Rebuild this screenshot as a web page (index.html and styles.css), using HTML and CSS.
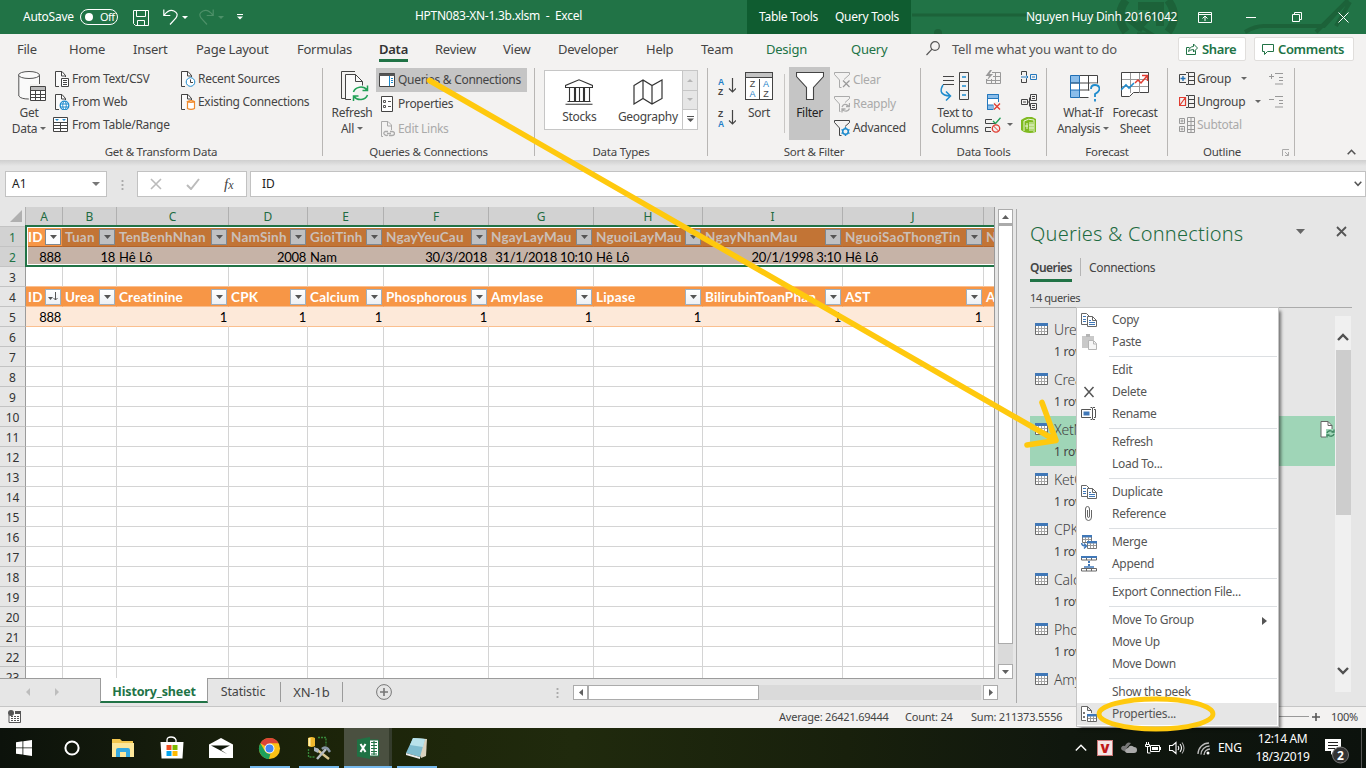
FILE: index.html
```html
<!DOCTYPE html>
<html lang="en">
<head>
<meta charset="utf-8">
<title>HPTN083-XN-1.3b.xlsm - Excel</title>
<link rel="stylesheet" href="styles.css">
</head>
<body>
<svg width="0" height="0" class="defs">
  <symbol id="doc" viewBox="0 0 16 16"><path d="M5 15.500H1.500V.500H8L11.500 4.500V6" fill="#fafafa" stroke="#444"/><path d="M7.500.500V5H12" fill="none" stroke="#444"/></symbol>
  <symbol id="qtable" viewBox="0 0 13 12"><path d="M.5.500h12v11H.5z" fill="#fff" stroke="#6a6a6a"/><path d="M0 0h13v3H0z" fill="#4078b8"/><path d="M1 5.500h11M1 8.500h11M3.500 3v8M6.500 3v8M9.500 3v8" stroke="#a6a6a6"/></symbol>
  <symbol id="copy" viewBox="0 0 16 16"><path d="M.5 1.500h5l3 3v8h-8z" fill="#fff" stroke="#666"/><path d="M6.500 4.500h5l4 4v6h-9z" fill="#fff" stroke="#666"/><path d="M11.500 4.500v4h4" fill="none" stroke="#666"/><path d="M2 4.500h3M2 7.500h3M2 9.500h3M8 8.500h2M8 10.500h6M8 12.500h6" stroke="#4078b8"/></symbol>
</svg>

<header class="titlebar">
  <svg class="circuit" width="453" height="34" viewBox="0 0 453 34" fill="none" stroke="#1c6239" stroke-width="3"><path d="M0 15h118M166 15h65M210 15l30 19h-15"/><path d="M208 15l22 16"/><circle cx="26" cy="33" r="4" fill="#1c6239" stroke="none"/><path d="M214 0q-12 16 0 32M256 0q12 16 0 32" stroke-width="8"/><path d="M224 29l22-22M226 6h22v20" stroke-width="8"/><path d="M333 32q10-6 19-6h60l24-26M404 32l32-32M424 26l14-24" stroke-width="4"/></svg>
  <div class="quick">
    <span class="autosave">AutoSave</span>
    <span class="toggle"><i></i>Off</span>
    <svg class="save" width="16" height="16" viewBox="0 0 16 16" fill="none" stroke="#fff"><path d="M.5.500h15v15h-13l-2-2zM3.500.500v6h9v-6M4.500 15.500v-5h7v5"/></svg>
    <svg class="undo" width="15" height="16" viewBox="0 0 15 16" fill="none" stroke="#fff" stroke-width="1.200"><path d="M.8.500v6h6.500M1 6.300Q6-.3 11 2t2 7L7 15.500"/></svg>
    <i class="caret w"></i>
    <svg class="redo" width="15" height="16" viewBox="0 0 15 16" fill="none" stroke="#4d9068" stroke-width="1.200"><path d="M14.200.500v6H7.700M14 6.300Q9-.3 4 2t-2 7L8 15.500"/></svg>
    <i class="caret g"></i>
    <svg class="more" width="6" height="6" viewBox="0 0 6 6"><path d="M0 .5h6" stroke="#fff"/><path d="M0 2.500h6L3 5.500z" fill="#fff"/></svg>
  </div>
  <div class="filename">HPTN083-XN-1.3b.xlsm&nbsp; -&nbsp; Excel</div>
  <div class="context"><span>Table Tools</span><span>Query Tools</span></div>
  <div class="account">Nguyen Huy Dinh 20161042</div>
  <div class="winbtns">
    <svg width="14" height="11" viewBox="0 0 14 11" fill="none" stroke="#fff"><path d="M.5.500h13v10H.5zM1 2.500h12M7 9V4.500M4.500 6.500L7 4l2.500 2.500"/></svg>
    <svg width="10" height="11" viewBox="0 0 10 11"><path d="M0 5.500h10" stroke="#fff"/></svg>
    <svg width="10" height="10" viewBox="0 0 10 10" fill="none" stroke="#fff"><path d="M.5 2.500h7v7h-7zM2.500 2.500v-2h7v7h-2"/></svg>
    <svg width="11" height="11" viewBox="0 0 11 11" stroke="#fff"><path d="M.5.500l10 10M10.500.500l-10 10"/></svg>
  </div>
</header>

<nav class="tabs">
  <span style="width:52px">File</span><span style="width:64px">Home</span><span style="width:63px">Insert</span><span style="width:101px">Page Layout</span><span style="width:82px">Formulas</span><span class="on" style="width:56px"><b>Data</b></span><span style="width:68px">Review</span><span style="width:55px">View</span><span style="width:88px">Developer</span><span style="width:55px">Help</span><span style="width:65px">Team</span><span class="gr" style="width:85px">Design</span><span class="gr" style="width:75px">Query</span>
  <svg width="14" height="15" viewBox="0 0 14 15" fill="none" stroke="#555" stroke-width="1.200"><circle cx="9" cy="5" r="4.300"/><path d="M6 8.200L.5 14"/></svg>
  <span class="tell">Tell me what you want to do</span>
  <button class="tb share"><svg width="12" height="12" viewBox="0 0 12 12" fill="none" stroke="#217346"><path d="M3.500 4.500h-3v7h9v-4M2.500 8.500q1-5 5-5v-2.500l4 4-4 4V6.500q-3 0-5 2z"/></svg>Share</button>
  <button class="tb"><svg width="12" height="12" viewBox="0 0 12 12" fill="none" stroke="#217346"><path d="M.5 1.500h11v7h-6l-3 3v-3h-2z"/></svg>Comments</button>
</nav>

<section class="ribbon">
  <div class="group" style="width:323px">
    <div class="gbody">
      <div class="big" style="width:44px;margin-left:7px"><svg class="r3" width="28" height="32" viewBox="0 0 28 32"><path d="M.8 5v21q2 3 11 3v-15h10V5" fill="#fafafa"/><path d="M.8 5v21q2 3 10 3M21.500 5v9" fill="none" stroke="#555"/><ellipse cx="11" cy="5" rx="10.500" ry="3.500" fill="#fafafa" stroke="#555"/><path d="M12.500 16.500h15v14h-15z" fill="#fff" stroke="#444"/><path d="M13 17h14v3H13z" fill="#bbb"/><path d="M13 20.500h14M13 24.500h14M13 27.500h14M17.500 20v10M22.500 20v10" stroke="#444"/></svg><span>Get<br>Data<i class="caret"></i></span></div>
      <div class="col" style="margin-left:2px;width:127px">
        <div class="it"><svg width="17" height="16" viewBox="-1 0 17 16"><use href="#doc" width="16" height="16"/><path d="M7.500 7.500h7v8h-7z" fill="#fff" stroke="#444"/><path d="M9 9.500h4M9 11.500h4M9 13.500h4" stroke="#444"/></svg>From Text/CSV</div>
        <div class="it"><svg width="17" height="16" viewBox="-1 0 17 16"><use href="#doc" width="16" height="16"/><circle cx="10.500" cy="11.500" r="4.300" fill="#fff" stroke="#1e8bcd" stroke-width="1.300"/><path d="M6.500 10h8M6.500 13h8" stroke="#1e8bcd"/><ellipse cx="10.500" cy="11.500" rx="1.800" ry="4" fill="none" stroke="#1e8bcd"/></svg>From Web</div>
        <div class="it"><svg width="17" height="16" viewBox="0 0 17 16"><path d="M.5.500h14v14H.5z" fill="#fff" stroke="#444"/><path d="M1 5.500h13M1 8.500h13M1 11.500h13M7.500 5v9" stroke="#444"/><path d="M2 2h4L4 4zM9 2h4l-2 2z" fill="#1e8bcd"/></svg>From Table/Range</div>
      </div>
      <div class="col">
        <div class="it"><svg width="16" height="16" viewBox="0 0 16 16"><use href="#doc" width="16" height="16"/><circle cx="10.500" cy="11" r="4.300" fill="#fff" stroke="#1e8bcd"/><path d="M10.500 8.500v3h2.500" fill="none" stroke="#444"/></svg>Recent Sources</div>
        <div class="it"><svg width="16" height="16" viewBox="0 0 16 16"><use href="#doc" width="16" height="16"/><path d="M7.500 7.500v7q3.500 1.800 7 0v-7q-3.500-1.800-7 0q3.500 1.800 7 0" fill="#fff" stroke="#f08a2c" stroke-width="1.200"/></svg>Existing Connections</div>
      </div>
    </div>
    <div class="glabel">Get &amp; Transform Data</div>
  </div>

  <div class="group" style="width:212px">
    <div class="gbody">
      <div class="big" style="width:50px;margin-left:4px"><svg class="r3" width="28" height="32" viewBox="0 0 28 32"><path d="M4.500 28.500H.5V1.500H14" fill="none" stroke="#444"/><path d="M12 28.500H4.500v-24h11l7 7v5l-8 5z" fill="#fafafa"/><path d="M10 29.500H4.500v-25h10l7 7v4M14.500 4.500v7h7" fill="none" stroke="#444"/><path d="M12.500 22a7.500 6.500 0 0 1 13.500-2M26.500 25a7.500 6.500 0 0 1-13.500 1.500M26.500 15.500v5h-5M12.500 31v-5h5" fill="none" stroke="#22a157" stroke-width="1.500"/></svg><span>Refresh<br>All<i class="caret"></i></span></div>
      <div class="col qc">
        <div class="it sel"><svg width="16" height="14" viewBox="0 0 16 14"><path d="M.5.500h15v13H.5z" fill="#fff" stroke="#444"/><path d="M0 .5h16v2.500H0z" fill="#555"/><path d="M10.500 3v10" stroke="#1e8bcd"/><path d="M12 5.500h2M12 7.500h2M12 9.500h2" stroke="#1e8bcd"/></svg>Queries &amp; Connections</div>
        <div class="it"><svg width="16" height="16" viewBox="0 0 16 16"><path d="M2.500.500h11v15h-11z" fill="#fff" stroke="#444"/><path d="M4.500 4.500h2v2h-2zM4.500 9.500h2v2h-2zM9 5.500h3M9 10.500h3" fill="none" stroke="#555"/></svg>Properties</div>
        <div class="it dis"><svg width="16" height="16" viewBox="0 0 16 16" fill="none" stroke="#aaa"><path d="M4 15.500H2.500V.500H9l3.500 3.500v5M8.500.500V5h4"/><path d="M9 14a2.500 2 0 0 1-3-3.500h3M11 10.500h2a2.500 2 0 0 1 0 4h-3M8 12.500h4" stroke-width="1.300"/></svg>Edit Links</div>
      </div>
    </div>
    <div class="glabel">Queries &amp; Connections</div>
  </div>

  <div class="group" style="width:173px">
    <div class="gbody">
      <div class="gallery">
        <div class="gi"><svg width="28" height="26" viewBox="0 0 28 26" fill="none" stroke="#333" stroke-width="1.100"><path d="M.5 8.500v-2L14 .800l13.500 5.700v2zM2.500 22.500h23M.5 25.200h27M4.500 9v13M9.500 9v13M10.500 9v13M14.500 9v13M18.500 9v13M19.500 9v13M24.500 9v13"/></svg>Stocks</div>
        <div class="gi"><svg width="30" height="26" viewBox="0 0 30 26" fill="none" stroke="#333" stroke-width="1.200"><path d="M1 6.500L10 1l9 5.500L29 1v18.500L19 25l-9-5.500L1 25zM10 1v18.500M19 6.500V25"/></svg>Geography</div>
        <div class="gs"><i><svg width="6" height="4"><path d="M0 4h6L3 1z" fill="#b5b5b5"/></svg></i><i><svg width="6" height="4"><path d="M0 0h6L3 3z" fill="#b5b5b5"/></svg></i><i class="l"><svg width="7" height="7" viewBox="0 0 7 7"><path d="M0 .5h7" stroke="#555"/><path d="M0 2.500h7L3.500 6z" fill="#555"/></svg></i></div>
      </div>
    </div>
    <div class="glabel">Data Types</div>
  </div>

  <div class="group" style="width:213px">
    <div class="gbody">
      <div class="azcol">
        <div class="azi"><div><b>A</b><span>Z</span></div><svg width="8" height="18" viewBox="0 0 8 18"><path d="M4.500 1v14M1 11.500L4.500 15 8 11.500" fill="none" stroke="#444" stroke-width="1.200"/></svg></div>
        <div class="azi"><div><span>Z</span><b>A</b></div><svg width="8" height="18" viewBox="0 0 8 18"><path d="M4.500 1v14M1 11.500L4.500 15 8 11.500" fill="none" stroke="#444" stroke-width="1.200"/></svg></div>
      </div>
      <div class="big sort"><div class="sortbox"><div><span>Z</span><b>A</b></div><div><b>A</b><span>Z</span></div></div><span>Sort</span></div>
      <i class="thin"></i>
      <div class="big pressed"><svg width="28" height="32" viewBox="0 0 28 32"><path d="M.5 2.500h27v4l-10 11v12h-7v-12l-10-11z" fill="#fff" stroke="#444" stroke-width="1.100"/></svg><span>Filter</span></div>
      <div class="col fl">
        <div class="it dis"><svg width="16" height="17" viewBox="0 0 16 17" fill="none" stroke="#aaa"><path d="M7.500 15.500h-2V8L.5 2.500v-2h15v2L10 7.500"/><path d="M9 8.500l6.500 6.500M15.500 8.500L9 15" stroke="#999" stroke-width="1.200"/></svg>Clear</div>
        <div class="it dis"><svg width="16" height="17" viewBox="0 0 16 17" fill="none" stroke="#aaa"><path d="M6.500 15.500h-1V8L.5 2.500v-2h15v2L11 6.500"/><path d="M8 11q2-4.500 6-1.500l1 1M15.500 7v3.500H12M15.500 12.500q-2 4-6 2l-1-1M8 16.500V13h3.500" stroke-width="1.300"/></svg>Reapply</div>
        <div class="it"><svg width="16" height="17" viewBox="0 0 16 17" fill="none" stroke="#444"><path d="M7.500 15.500h-2V8L.5 2.500v-2h15v2L11 6.500"/><circle cx="11.500" cy="11.500" r="2.800" stroke="#1e8bcd" stroke-width="1.500"/><path d="M11.500 7v2M11.500 14v2M7.500 9.500l1.500 1M14 12.500l1.500 1M7.500 13.500l1.500-1M14 10.500l1.500-1" stroke="#1e8bcd" stroke-width="1.500"/></svg>Advanced</div>
      </div>
    </div>
    <div class="glabel">Sort &amp; Filter</div>
  </div>

  <div class="group" style="width:126px">
    <div class="gbody">
      <div class="big" style="width:56px;margin-left:6px"><svg class="l3" width="32" height="32" viewBox="0 0 32 32" fill="none" stroke="#444"><path d="M6 6.500h11M6 10.500h11M6 14.500h11"/><path d="M22.500 2.500h9v27h-9zM22.500 11.500h9M22.500 20.500h9"/><path d="M25 7h4M25 16h4M25 25h4" stroke="#1e8bcd" stroke-width="1.300"/><path d="M6 15Q0 25 13 26M9 21.500l4.500 4.500L9 30.500" stroke="#1e8bcd" stroke-width="1.500"/></svg><span>Text to<br>Columns</span></div>
      <div class="icol" style="margin-left:2px">
        <svg width="16" height="16" viewBox="0 0 16 16" fill="none" stroke="#999"><path d="M7 2.500h8.500v11h-14V9M8 6.500h7.500M2 10.500h13.500M6.500 9v4.500M10.500 2.500v11"/><path d="M5 0L.5 6H4L2 10.500 8 4H4.500L7 0z" fill="#999" stroke="none"/></svg>
        <svg width="16" height="16" viewBox="0 0 16 16" fill="none" stroke="#2478bd"><path d="M2.500.500h11v15h-11z" fill="#fff"/><path d="M2.500.500h11v4h-11zM2.500 11h6v4.500h-6z" fill="#8abdea"/><path d="M8.500 8h8v8.500h-8z" fill="#f3f2f1" stroke="none"/><path d="M9 9.500l6 6M15 9.500l-6 6" stroke="#e03c31" stroke-width="1.300"/></svg>
        <svg width="16" height="16" viewBox="0 0 16 16" fill="none" stroke="#444"><path d="M7 2.500H.5v4H10M6 10.500H.5v4H6"/><path d="M8 4l2.500 2.500L15.500.800" stroke="#22a157" stroke-width="1.300"/><circle cx="11" cy="11.500" r="3.700" stroke="#e03c31" stroke-width="1.300"/><path d="M8.500 9l5 5" stroke="#e03c31"/></svg>
      </div>
      <i class="caret cc"></i>
      <div class="icol i2">
        <svg width="16" height="16" viewBox="0 0 16 16" fill="none" stroke="#444"><path d="M.5 5V1.500h5V5M.5 9v3.500h5V9"/><path d="M0 7h7M5 5l2 2-2 2M9.500 4.500h6v5h-6zM11 7h3" stroke="#2478bd"/></svg>
        <svg width="16" height="16" viewBox="0 0 16 16" fill="none" stroke="#444"><path d="M.5 5.500h6v5h-6zM9.500.500h6v6h-6zM9.500 9.500h6v6h-6zM2 8h3M11 2.500h3M11 4.500h3M11 11.500h3M11 13.500h3M7 8h1.500V3.500M8.500 8v4.500"/></svg>
        <svg width="16" height="16" viewBox="0 0 16 16"><path d="M0 3Q6-1.500 11 0l4 2v13Q9 17 3 15l-3-2z" fill="#7fba20"/><path d="M3 14V4q4-3 10-1v12M4 9h3M6 6v6M9 5v9M11 5v9M8 8h5M8 11h5" stroke="#e9f6d5" fill="none"/></svg>
      </div>
    </div>
    <div class="glabel">Data Tools</div>
  </div>

  <div class="group" style="width:121px">
    <div class="gbody">
      <div class="big" style="width:56px;margin-left:8px"><svg class="r2" width="30" height="32" viewBox="0 0 30 32"><path d="M.5 5.500h27v22H.5z" fill="#fff"/><path d="M.5 5.500h9v22h-9z" fill="#8abdea"/><path d="M.5 13h9v7h-9z" fill="#fff"/><path d="M9.500 5.500h18v9M.5 13h27M9.500 20h10M18.500 5.500v15M9.500 27.500h9" stroke="#444" fill="none"/><path d="M.5 5.500h9v22h-9zM.5 13h9M.5 20h9" stroke="#1f6fb5" fill="none"/><path d="M20 13.500h10v19H20z" fill="#f3f2f1"/><path d="M21 19q0-4 4-4t4.500 3.500q0 3-4.500 5.500v3M25 29v2.500" stroke="#1e8bcd" stroke-width="1.800" fill="none"/></svg><span>What-If<br>Analysis<i class="caret"></i></span></div>
      <div class="big" style="width:48px"><svg width="28" height="32" viewBox="0 0 28 32" fill="none"><path d="M.5 2.500h27v20h-15l-4 4H.5z" fill="#fff" stroke="#444"/><path d="M1 9.500h26M1 16.500h26M9.500 3v20M18.500 3v20" stroke="#999"/><path d="M0 20l5-5 3 3 5-5" stroke="#1e8bcd" stroke-width="1.600"/><path d="M14 13l3-3 3 3 6-7M21 5.500h5.500V11" stroke="#e03c31" stroke-width="1.500"/></svg><span>Forecast<br>Sheet</span></div>
    </div>
    <div class="glabel">Forecast</div>
  </div>

  <div class="group" style="width:127px">
    <div class="gbody">
      <div class="col" style="margin-left:11px;width:90px">
        <div class="it"><svg width="16" height="16" viewBox="0 0 16 16" fill="none" stroke="#444"><path d="M7 3.500H.5v8H7M9.500 1.500h6v12h-6zM9.500 5.500h6M9.500 9.500h6M7 1.500h2M7 13.500h2"/><path d="M4 5v5M1.500 7.500h5" stroke="#1f6fb5" stroke-width="1.300"/></svg>Group<i class="caret" style="margin-left:8px"></i></div>
        <div class="it"><svg width="16" height="16" viewBox="0 0 16 16" fill="none" stroke="#444"><path d="M9.500 1.500h6v12h-6zM9.500 5.500h6M9.500 9.500h6M7 1.500h2M7 13.500h2"/><path d="M.5 3.500h6v8h-6zM1 11l5-7" stroke="#e03c31" stroke-width="1.200"/></svg>Ungroup<i class="caret" style="margin-left:8px"></i></div>
        <div class="it dis"><svg width="16" height="16" viewBox="0 0 16 16" fill="none" stroke="#999"><path d="M.5 1.500h5v5h-5zM.5 9.500h5v5h-5zM8.500.500h7v15h-7zM8.500 4.500h7M8.500 8.500h7M8.500 12.500h7M12 .5v15M3 2.500v3M1.500 4h3M3 10.500v3M1.500 12h3"/></svg>Subtotal</div>
      </div>
      <div class="col">
        <div class="it"><svg width="16" height="16" viewBox="0 0 16 16" stroke="#999"><path d="M0 5.500h5M2.500 3v5M6 2.500h8M10 6.500h4M10 9.500h4M6 13h8"/></svg></div>
        <div class="it"><svg width="16" height="16" viewBox="0 0 16 16" stroke="#999"><path d="M0 5.500h5M6 2.500h8M10 6.500h4M10 9.500h4M6 13h8"/></svg></div>
      </div>
    </div>
    <div class="glabel out">Outline<svg width="7" height="7" viewBox="0 0 7 7" fill="none" stroke="#aaa"><path d="M.5 7V.500H7M3 3l3.500 3.500M6.500 3v3.500H3"/></svg></div>
  </div>
  <svg class="collapse" width="9" height="6" viewBox="0 0 9 6"><path d="M.7 5.300l3.800-4 3.800 4" fill="none" stroke="#555" stroke-width="1.600"/></svg>
</section>

<div class="fbar">
  <div class="namebox">A1<i class="caret d"></i></div>
  <span class="dots"></span>
  <div class="fbtns">
    <svg width="12" height="12" viewBox="0 0 12 12"><path d="M1 1l10 10M11 1L1 11" stroke="#bbb" stroke-width="1.600"/></svg>
    <svg width="14" height="12" viewBox="0 0 14 12"><path d="M1 7l4 4 8-10" fill="none" stroke="#bbb" stroke-width="2"/></svg>
    <span class="fx">f<small>x</small></span>
  </div>
  <div class="finput">ID<svg width="8" height="6" viewBox="0 0 8 6"><path d="M.7.700L4 4.300 7.300.700" fill="none" stroke="#555" stroke-width="1.500"/></svg></div>
</div>

<main class="work">
  <div class="book">
    <div class="gridwrap">
      <div class="sheet"><div id="grid"></div><div class="selection"></div></div>
      <div class="vscroll">
        <i class="sb"><svg width="7" height="4"><path d="M0 4h7L3.500 0z" fill="#606060"/></svg></i>
        <div class="vthumb"></div><div class="vtrack"></div>
        <i class="sb"><svg width="7" height="4"><path d="M0 0h7L3.500 4z" fill="#606060"/></svg></i>
      </div>
    </div>
    <div class="sheettabs">
      <svg class="nav" width="34" height="8" viewBox="0 0 34 8"><path d="M4 0v8L0 4zM29 0v8l4-4z" fill="#bdbdbd"/></svg>
      <span class="st act">History_sheet</span><span class="st s2">Statistic</span><span class="st s3">XN-1b</span>
      <svg class="add" width="16" height="16" viewBox="0 0 16 16" fill="none" stroke="#777"><circle cx="8" cy="8" r="7.400"/><path d="M8 4v8M4 8h8" stroke-width="1.600"/></svg>
      <span class="dots hd"></span>
      <div class="hscroll"><i class="sb"><svg width="4" height="7"><path d="M4 0v7L0 3.500z" fill="#606060"/></svg></i><div class="hthumb"></div><div class="htrack"></div><i class="sb"><svg width="4" height="7"><path d="M0 0v7l4-3.500z" fill="#606060"/></svg></i></div>
    </div>
  </div>
  <aside class="pane">
    <div class="phead"><h1>Queries &amp; Connections</h1><svg class="pc" width="9" height="5"><path d="M0 0h9L4.500 5z" fill="#666"/></svg><svg width="11" height="11" viewBox="0 0 11 11"><path d="M1 1l9 9M10 1l-9 9" stroke="#555" stroke-width="1.800"/></svg></div>
    <div class="ptabs"><b>Queries</b><i></i><span>Connections</span></div>
    <div class="count">14 queries</div>
    <div class="plist">
      <div class="items" id="queries"></div>
      <div class="pscroll"><svg width="12" height="9" viewBox="0 0 12 9"><path d="M1 7l5-5 5 5" fill="none" stroke="#505050" stroke-width="2.400"/></svg><i></i><svg width="12" height="9" viewBox="0 0 12 9"><path d="M1 2l5 5 5-5" fill="none" stroke="#505050" stroke-width="2.400"/></svg></div>
    </div>
  </aside>
</main>

<div class="status">
  <svg width="13" height="13" viewBox="0 0 13 13"><path d="M1 5v7.500h11.500V1.500H7" fill="#fff" stroke="#555"/><circle cx="3" cy="3" r="3" fill="#555"/><path d="M7 1h6v3H7z" fill="#555"/><path d="M3 6.500h8M3 8.500h8M3 10.500h8" stroke="#555" stroke-dasharray="2 1"/></svg>
  <span class="s-avg">Average: 26421.69444</span><span class="s-cnt">Count: 24</span><span class="s-sum">Sum: 211373.5556</span>
  <span class="zl"></span><svg class="plus" width="8" height="8"><path d="M4 0v8M0 4h8" stroke="#555" stroke-width="1.600"/></svg><span class="zoom">100%</span>
</div>

<footer class="taskbar">
  <div class="slot s48"><svg width="16" height="16" viewBox="0 0 16 16" fill="#fff"><path d="M0 2.200L6.500 1.300v6.200H0zM7.300 1.200L16 0v7.500H7.300zM0 8.300h6.500v6.300L0 13.700zM7.300 8.300H16V16l-8.700-1.200z"/></svg></div>
  <div class="slot s48 cort"><svg width="16" height="16"><circle cx="8" cy="8" r="6.600" fill="none" stroke="#fff" stroke-width="2"/></svg></div>
  <div class="slot"><svg width="22" height="20" viewBox="0 0 22 20"><path d="M0 1h8l2 2h11v14H0z" fill="#f3c74f"/><path d="M0 5h22v14H0z" fill="#fde79a"/><path d="M4 19v-7q0-2 2-2h10q2 0 2 2v7h-4v-5H8v5z" fill="#35a9e1"/></svg></div>
  <div class="slot"><svg class="up" width="24" height="23" viewBox="0 0 24 23"><path d="M7 6V4q0-3 4-3t5 3v2" fill="none" stroke="#fff" stroke-width="1.300"/><path d="M.5 6h23l-1 16.500h-21z" fill="#fff"/><path d="M6.500 9h5v5h-5z" fill="#f25022"/><path d="M12.500 9h5v5h-5z" fill="#7fba00"/><path d="M6.500 15h5v5h-5z" fill="#00a4ef"/><path d="M12.500 15h5v5h-5z" fill="#ffb900"/></svg></div>
  <div class="slot"><svg width="24" height="20" viewBox="0 0 24 20"><path d="M0 6.500L12 0l12 6.500V20H0z" fill="#fff"/><path d="M2 7.500h19L12 12l6 4z" fill="#11180b"/></svg></div>
  <div class="slot run"><svg width="23" height="23" viewBox="0 0 24 24"><circle cx="12" cy="12" r="11" fill="#fbc116"/><path d="M12 12L2.500 6.500A11 11 0 0 1 21.600 6.500H12z" fill="#db4437"/><path d="M2.500 6.400L7.300 14.800A5.500 5.500 0 0 0 13 17.300L11.500 23A11 11 0 0 1 2.500 6.400z" fill="#1da05b"/><circle cx="12" cy="12" r="5.200" fill="#fff"/><circle cx="12" cy="12" r="4.200" fill="#4285f4"/></svg></div>
  <div class="slot run"><svg width="24" height="25" viewBox="0 0 24 25"><path d="M1 2q3.500-2 7 0v8q-3.500 2-7 0z" fill="#f0b92e"/><path d="M2.500 2v8" stroke="#fff2b0" stroke-width="2"/><path d="M11 1.500h8v8M1.500 13v8h6" fill="none" stroke="#37883a" stroke-dasharray="2 1" stroke-width="1.300"/><path d="M9 13l13 10" stroke="#d9c68e" stroke-width="2.500"/><path d="M10 23l9-10" stroke="#b7bcc2" stroke-width="2.500"/><path d="M15 13q3-3 6 0l2 3" stroke="#8a98a8" stroke-width="2.500" fill="none"/><path d="M7 11l5 2-1 4-4-2" fill="#aab4be"/></svg></div>
  <div class="slot run xl"><svg width="22" height="22" viewBox="0 0 22 22"><path d="M12 3h9.500v16H12z" fill="#fff" stroke="#217346"/><path d="M14 5.500h6M14 8.500h6M14 11.500h6M14 14.500h6M14 17h6M17 4v14" stroke="#217346" stroke-width="1.200"/><path d="M0 2.500L13 0v22L0 19.500z" fill="#1f7244"/><path d="M3.500 7l5 8M8.500 7l-5 8" stroke="#fff" stroke-width="2"/></svg></div>
  <div class="slot run np"><svg width="24" height="24" viewBox="0 0 24 24"><path d="M8 2l14 1-1 17-5 2z" fill="#d9d2bf"/><path d="M8 2l12 1-5 18-14-4z" fill="#7fbccf"/><path d="M8 2l12 1-2 8-13-2z" fill="#b9e2eb"/><path d="M1 17l14 4v2L1 19z" fill="#eee"/></svg></div>
  <div class="tray">
    <svg width="12" height="8" viewBox="0 0 12 8"><path d="M.8 6.500L6 1.300l5.200 5.200" fill="none" stroke="#fff" stroke-width="1.400"/></svg>
    <span class="vk">V</span>
    <svg width="16" height="12" viewBox="0 0 16 12"><path d="M3 9Q-1 8 .5 5 2 3 4 4 6-1 10 1L5 7v3z" fill="#777"/><path d="M6 11Q3 10 5 7q1-1 2-1 2-4 6-1 3 0 3 3t-3 3z" fill="#aaa"/></svg>
    <svg width="16" height="12" viewBox="0 0 16 12" fill="none" stroke="#fff"><path d="M5.500 3.500h9v6h-9zM15.500 5v3M1.500 0v2M3.500 0v2M.5 2.500h4v2h-4zM2.500 5v6h3"/><path d="M7 5h6v3H7z" fill="#fff" stroke="none"/></svg>
    <svg width="16" height="14" viewBox="0 0 16 14" fill="none" stroke="#fff" stroke-width="1.100"><path d="M.5 4.500h3L7 1.500v11L3.500 9.500h-3zM9 5q1.500 2 0 4M11 3q3 4 0 8"/><path d="M13 1.500q4 5.500 0 11" stroke="#aaa"/></svg>
    <svg width="13" height="13" viewBox="0 0 13 13" fill="none" stroke="#bbb" stroke-width="1.300"><path d="M1 12A11 11 0 0 1 12 1M4 12.500A8.500 8.500 0 0 1 12.500 4M7 13A6 6 0 0 1 13 7"/><circle cx="11" cy="11" r="1.500" fill="#fff" stroke="none"/></svg>
    <span class="eng">ENG</span>
    <span class="clock">12:14 AM<br>18/3/2019</span>
    <svg class="note" width="25" height="26" viewBox="0 0 25 26"><path d="M0 1h16v12H9l-3 4v-4H0z" fill="#fff"/><path d="M3 4.500h10M3 7.500h10M3 10.500h7" stroke="#222"/><circle cx="15.500" cy="17" r="8" fill="#333" stroke="#777"/><text x="12" y="21.500" class="nn">2</text></svg>
    <i class="peek"></i>
  </div>
</footer>

<div class="menu">
  <div class="mi"><svg width="16" height="16"><use href="#copy"/></svg>Copy</div>
  <div class="mi"><svg width="16" height="16" viewBox="0 0 16 16"><path d="M1 2h12v5H7v7H1z" fill="#c9c9c9"/><path d="M5 0h4v3H5z" fill="#b5b5b5"/><path d="M7.500 6.500h5l3 3v6h-8z" fill="#f6f6f6" stroke="#b5b5b5"/><path d="M12.500 7v3h3" fill="none" stroke="#b5b5b5"/></svg>Paste</div><hr>
  <div class="mi"><svg width="16" height="16"></svg>Edit</div>
  <div class="mi"><svg width="16" height="16"><path d="M3.500 3l9 10M12.500 3l-9 10" stroke="#555" stroke-width="1.500"/></svg>Delete</div>
  <div class="mi"><svg width="16" height="16" viewBox="0 0 16 16" fill="none" stroke="#555"><path d="M10 3.500H.5v8H10M13 3.500h1.500v8H13M9.500 1.500h1.500l.5.500.5-.5H14M9.500 13.500h1.500l.5-.5.5.500H14M11.500 2v11"/><path d="M2.500 5.500h6v4h-6z" fill="#4078b8" stroke="none"/></svg>Rename</div><hr>
  <div class="mi"><svg width="16" height="16"></svg>Refresh</div>
  <div class="mi"><svg width="16" height="16"></svg>Load To...</div><hr>
  <div class="mi"><svg width="16" height="16"><use href="#copy"/></svg>Duplicate</div>
  <div class="mi"><svg width="16" height="16" viewBox="0 0 16 16" fill="none" stroke="#666"><path d="M6.500 4v6q0 1.500 1 1.500t1-1.500V3q0-2.500-2-2.500T4.500 3v8q0 3.500 3 3.500t3-3.500V4"/></svg>Reference</div><hr>
  <div class="mi"><svg width="16" height="16" viewBox="0 0 16 16"><path d="M1.500 1.500h9v7h-9zM6.500 7.500h9v7h-9z" fill="#fff" stroke="#777"/><path d="M1 1h10v2.500H1zM6 7h10v2.500H6z" fill="#4078b8"/><path d="M2 5.500h8M4.500 3v5M7.500 3v4M7 11.500h8M9.500 9v5M12.500 9v5" stroke="#999"/><path d="M.7 9q0 3 4 3M3 9.500l2.500 2.500L3 14.500" fill="none" stroke="#4078b8" stroke-width="1.500"/></svg>Merge</div>
  <div class="mi"><svg width="16" height="16" viewBox="0 0 16 16"><path d="M.5 1.500h15v2.500H.5zM.5 12.500h15v2.500H.5zM5.500 1v3M10.500 1v3M5.500 12v3M10.500 12v3" fill="#fff" stroke="#666"/><path d="M0 0h16v2H0zM7 5h2v2H7zM7 8h2v2H7z" fill="#4078b8"/><path d="M3 11h10" stroke="#4078b8" stroke-width="1.500"/></svg>Append</div><hr>
  <div class="mi"><svg width="16" height="16"></svg>Export Connection File...</div><hr>
  <div class="mi"><svg width="16" height="16"></svg>Move To Group<svg class="sub" width="5" height="8"><path d="M0 0v8l5-4z" fill="#555"/></svg></div>
  <div class="mi"><svg width="16" height="16"></svg>Move Up</div>
  <div class="mi"><svg width="16" height="16"></svg>Move Down</div><hr>
  <div class="mi"><svg width="16" height="16"></svg>Show the peek</div>
  <div class="mi hov"><svg width="16" height="16" viewBox="0 0 16 16"><path d="M5 14.500H.5v-14h6l4 4V7M6.500.500v4h4" fill="#fff" stroke="#666"/><path d="M2 6h2v2H2zM2 10h2v2H2z" fill="#777"/><path d="M6.500 8.500h9v7h-9z" fill="#fff" stroke="#666"/><path d="M6 8h10v2.500H6z" fill="#4078b8"/><path d="M7 12.500h8M9.500 10v5M12.500 10v5" stroke="#999"/></svg>Properties...</div>
</div>

<svg class="marks" width="1366" height="768" fill="none" stroke="#ffc90e" stroke-linecap="round" stroke-linejoin="round">
  <path d="M429.500 80.500L1055 440M1042 402.500L1056 440.500L1027 445" stroke-width="5.600"/>
  <ellipse cx="1156" cy="714" rx="57" ry="15" stroke-width="4.800"/>
</svg>
<script src="grid.js"></script>
</body>
</html>
```

FILE: styles.css
```css
* { box-sizing: border-box; }
body { margin: 0; width: 1366px; height: 768px; overflow: hidden; position: relative; font: 12px/16px "Noto Sans", "Open Sans", sans-serif; color: #444; background: #e6e6e6; display: flex; flex-direction: column; }
svg { flex: none; display: block; }
i { font-style: normal; }
.defs { position: absolute; }
.caret { display: inline-block; flex: none; border: 3px solid transparent; border-top: 3px solid #666; border-bottom: 0; vertical-align: 3px; margin-left: 3px; }
.caret.w { border-top-color: #fff; }
.caret.g { border-top-color: #4d9068; }
.caret.d { border-width: 4px 4px 0; border-top-color: #777; }

.titlebar { height: 34px; flex: none; background: #217346; color: #fff; display: flex; align-items: center; position: relative; }
.circuit { position: absolute; left: 911px; top: 0; width: 455px; }
.circuit ~ * { position: relative; }
.titlebar > div { letter-spacing: -.27px; }
.quick { display: flex; align-items: center; width: 415px; padding-left: 23px; }
.autosave { width: 57px; }
.toggle { width: 38px; height: 16px; border: 1px solid #fff; border-radius: 8px; display: flex; align-items: center; gap: 7px; padding-left: 4px; font-size: 11px; letter-spacing: -.5px; }
.toggle i { width: 8px; height: 8px; border-radius: 4px; background: #fff; }
.save { margin-left: 15px; margin-top: 2px; }
.undo { margin-left: 14px; }
.redo { margin-left: 11px; }
.quick .caret { margin-left: 4px; }
.quick .more { margin-left: 13px; }
.filename { width: 332px; height: 18px; }
.context { width: 164px; height: 34px; background: #0f5c30; display: flex; align-items: center; padding-left: 12px; padding-bottom: 1px; }
.context span { width: 80px; }
.account { margin-left: 115px; width: 172px; }
.winbtns { display: flex; align-items: center; }
.winbtns svg:nth-child(1) { margin-right: 34px; }
.winbtns svg:nth-child(2) { margin-right: 36px; }
.winbtns svg:nth-child(3) { margin-right: 36px; }

.tabs { height: 33px; flex: none; background: #f3f2f1; display: flex; align-items: center; padding-left: 17px; font-size: 13px; letter-spacing: -.25px; padding-bottom: 4px; }
.tabs > * { flex: none; }
.tabs .on b { display: inline-block; height: 25px; padding-top: 4px; border-bottom: 3px solid #217346; color: #333; font-weight: 600; line-height: 16px; }
.tabs .on { height: 24px; }
.gr { color: #217346; }
.tell { margin-left: 12px; width: 226px; color: #555; }
.tb { height: 24px; width: 68px; margin: 1px 8px 0 0; padding: 0 0 1px 7px; border: 1px solid #e0dedc; border-radius: 2px; background: #fff; color: #217346; font: 600 13px "Noto Sans", sans-serif; letter-spacing: -.35px; display: flex; align-items: center; gap: 4px; }
.tb + .tb { width: 100px; margin-right: 0; }

.ribbon { height: 93px; flex: none; background: #f3f2f1; display: flex; position: relative; letter-spacing: -.3px; }
.group { flex: none; display: flex; flex-direction: column; position: relative; border-right: 1px solid #b8b6b4; margin: 1px 0 3px; height: 88px; }
.gbody { display: flex; height: 73px; }
.glabel { height: 15px; line-height: 22px; text-align: center; font-size: 11.500px; letter-spacing: -.25px; }
.out { display: flex; justify-content: center; padding-left: 30px; }
.out svg { margin: 8px 0 0 41px; }
.big { display: flex; flex-direction: column; align-items: center; text-align: center; padding-top: 2px; flex: none; white-space: nowrap; }
.big > span { margin-top: 3px; }
.big svg { height: 32px; }
.r3 { margin-left: 6px; }
.r2 { margin-left: 4px; }
.l3 { margin-right: 5px; }
.pressed { width: 41px; height: 73px; margin-top: -1px; padding-top: 3px; background: #c5c5c5; color: #222; }
.col { display: flex; flex-direction: column; flex: none; margin-top: -1px; }
.it { height: 23px; display: flex; align-items: center; gap: 2px; white-space: nowrap; }
.dis { color: #aaa; }
.qc .it { height: 24px; padding-left: 3px; gap: 3px; width: 151px; margin-bottom: .5px; }
.qc { margin-left: -1px; margin-top: 0; }
.qc .it + .it { margin-left: 0; }
.sel { background: #c5c5c5; }
.fl { margin-left: 4px; margin-top: 0; }
.fl .it { height: 24px; gap: 3px; }
.gallery { margin: 2px 0 0 9px; width: 154px; height: 60px; background: #fff; border: 1px solid #c6c6c6; display: flex; }
.gi { width: 69px; display: flex; flex-direction: column; align-items: center; padding-top: 8px; gap: 4px; }
.gs { width: 15px; display: flex; flex-direction: column; border-left: 1px solid #c6c6c6; }
.gs i { flex: 1; background: #e6e6e6; border-bottom: 1px solid #c6c6c6; display: flex; align-items: center; justify-content: center; }
.gs .l { background: #fff; border: 0; }
.azcol { display: flex; flex-direction: column; gap: 12px; padding: 9px 0 0 10px; width: 29px; }
.azi { display: flex; gap: 2px; height: 20px; }
.azi b, .azi span { display: block; width: 8px; font: 700 8.500px/10px "Liberation Sans", sans-serif; letter-spacing: 0; }
.azcol b, .sortbox b { color: #1e7fc8; }
.sort { width: 44px; }
.sortbox { width: 28px; height: 28px; margin: 2px 0 2px; border: 1px solid #444; border-top-width: 1px; background: #fff; display: flex; box-shadow: inset 0 4px #c3c3c3, inset 0 5px #444; padding-top: 6px; }
.sortbox div { width: 13px; }
.sortbox div + div { border-left: 1px solid #444; }
.sortbox b, .sortbox span { display: block; font: 9px/10px "Liberation Sans", sans-serif; letter-spacing: 0; text-align: center; }
.thin { width: 1px; height: 59px; background: #c8c6c4; margin: 6px 4px 0 3px; }
.icol { display: flex; flex-direction: column; gap: 7.500px; padding-top: 2px; }
.i2 { margin-left: -1px; }
.cc { margin: 55px 9px 0 6px; height: 3px; }
.collapse { margin: 82px 0 0 52px; }

.fbar { height: 47px; flex: none; display: flex; align-items: flex-start; padding: 11px 0 0 5px; background: linear-gradient(#cfcfcf, #e6e6e6 6px); font-size: 12px; color: #222; }
.namebox, .fbtns, .finput { height: 26px; background: #fff; border: 1px solid #c2c2c2; display: flex; align-items: center; }
.namebox { width: 102px; padding: 0 6px; justify-content: space-between; }
.dots { width: 3px; height: 11px; margin: 8px 13px 0 14px; background: radial-gradient(circle, #aaa 1px, transparent 1.200px) 0 0 / 3px 4px; }
.fbtns { width: 110px; padding-left: 12px; gap: 24px; }
.fx { font: italic 15px "Liberation Serif", serif; color: #444; }
.fx small { font-size: 12px; }
.finput { margin-left: 3px; flex: 1; padding: 0 4px 0 11px; justify-content: space-between; }
.finput svg { margin-right: -1px; }

.work { flex: none; height: 499px; display: flex; }
.book { width: 1013px; display: flex; flex-direction: column; flex: none; }
.gridwrap { display: flex; height: 472px; }
.sheet { width: 995px; height: 472px; overflow: hidden; position: relative; border-right: 1px solid #9b9b9b; border-bottom: 1px solid #9b9b9b; flex: none; }
.row { display: flex; height: 20px; width: 1010px; font: 13px/19px Lato, sans-serif; color: #000; }
.rh { width: 26px; flex: none; background: #e6e6e6; border-right: 1px solid #9b9b9b; border-bottom: 1px solid #c3c3c3; text-align: center; font: 12px/21px "Noto Sans"; color: #333; }
.row.hl .rh { background: #d2d2d2; color: #217346; border-right-color: #217346; }
.c { flex: none; background: #fff; border-right: 1px solid #d4d4d4; border-bottom: 1px solid #d4d4d4; padding: 1px 2px 0; white-space: nowrap; overflow: hidden; display: flex; justify-content: space-between; }
.c.n { justify-content: flex-end; letter-spacing: -.3px; padding-right: 1px; }
.ch { background: #d2d2d2; color: #1e6b41; justify-content: center; border-right-color: #b0b0b0; border-bottom-color: #b0b0b0; font: 12px/19px "Noto Sans"; padding: 0; }
.corner { display: flex; justify-content: flex-end; align-items: flex-end; padding: 0 3px 4px 0; border-right-color: #b0b0b0; }
.th { background: #f79646; color: #fff; font-weight: 700; font-size: 13.500px; letter-spacing: .2px; padding-right: 1px; border-color: #f79646; border-bottom-color: #f9bd8c; }
.th.s { background: #c27435; color: #cbbfb7; border-color: #c27435; border-bottom-color: #b3642a; }
.sd { background: #c6b3a7; border-color: #c6b3a7; }
.td { background: #fde9d9; border-color: #fde9d9; border-bottom-color: #fabf8f; }
.pre { border-bottom-color: #fabf8f; }
.fb { width: 16px; height: 16px; flex: none; margin-top: 1px; border: 1px solid #9fb0c0; background: linear-gradient(#fff, #eef1f5); display: flex; align-items: center; justify-content: center; }
.s .fb { background: #bfc0c2; border-color: #7e8891; }
.th.s.first { background: #f79646; color: #fff; }
.s.first .fb { background: #fbfcfd; }
.selection { position: absolute; left: 25px; top: 18px; width: 980px; height: 42px; border: 2px solid #217346; box-shadow: inset 0 0 0 1px #fff; }
.vscroll { width: 18px; display: flex; flex-direction: column; padding: 2px 0 0 3px; }
.sb { width: 15px; height: 15px; background: #fff; border: 1px solid #ababab; display: flex; align-items: center; justify-content: center; flex: none; }
.vthumb { height: 420px; background: #fff; border: 1px solid #ababab; border-top-width: 2px; flex: none; }
.vtrack { flex: 1; background: #dadada; }
.sheettabs { height: 27px; display: flex; align-items: flex-start; }
.nav { margin: 9px 0 0 26px; width: 34px; }
.st { height: 24px; line-height: 25px; font-size: 12.500px; letter-spacing: -.15px; text-align: center; }
.act { margin: -1px 0 0 40px; width: 108px; background: #fff; border-left: 1px solid #9b9b9b; border-right: 1px solid #9b9b9b; border-bottom: 2px solid #217346; color: #217346; font-weight: 700; letter-spacing: -.15px; position: relative; height: 25px; line-height: 27px; }
.s2, .s3 { height: 20px; margin-top: 3px; line-height: 20px; border-right: 1px solid #9b9b9b; }
.s2 { width: 73px; padding-right: 2px; }
.s3 { width: 62px; font-size: 13px; }
.add { margin: 5px 0 0 33px; }
.hd { margin: 8px 0 0 164px; }
.hscroll { display: flex; margin: 6px 0 0 14px; height: 15px; width: 425px; flex: none; }
.hthumb { width: 171px; background: #fff; border: 1px solid #ababab; }
.htrack { flex: 1; background: #dadada; margin-right: 2px; }

.pane { margin-left: 3px; flex: 1; border-left: 1px solid #ababab; margin-top: 2px; margin-bottom: 3px; padding-left: 13px; }
.phead { display: flex; height: 44px; align-items: center; padding-top: 5px; }
h1 { margin: 0; width: 266px; font: 300 20px/28px "Noto Sans"; color: #1e6b41; letter-spacing: .2px; white-space: nowrap; }
.phead svg:last-child { margin: -5px 0 0 31px; }
.pc { margin-top: -5px; }
.ptabs { display: flex; height: 31px; align-items: flex-start; padding-top: 5px; letter-spacing: -.35px; }
.ptabs b { width: 42px; height: 24px; padding-top: 2px; border-bottom: 3px solid #217346; font-weight: 600; letter-spacing: -.55px; }
.ptabs i { width: 1px; height: 18px; background: #b5b5b5; margin: 0 8px; }
.ptabs span { padding-top: 2px; }
.count { height: 24px; width: 322px; border-bottom: 1px solid #ababab; font-size: 11px; padding-top: 6px; letter-spacing: -.4px; }
.plist { display: flex; margin-top: 8px; height: 376px; width: 322px; }
.items { width: 305px; overflow: hidden; }
.q { height: 50px; padding-left: 5px; display: flex; gap: 6px; }
.q svg { margin-top: 7px; }
.q div { font: 300 14px/28px "Noto Sans"; letter-spacing: -.2px; width: 264px; }
.q div + svg { margin: 5px 0 0 -3px; }
.q p { margin: -1px 0 0; font: 12px/18px "Noto Sans"; }
.q.g { background: #9fd5b7; }
.pscroll { width: 16px; height: 376px; background: #f0f0f0; display: flex; flex-direction: column; align-items: center; padding-top: 17px; }
.pscroll i { width: 15px; height: 165px; background: #cdcdcd; margin: 8px 0 151px; flex: none; }

.status { height: 22px; flex: none; background: #f3f2f1; border-top: 1px solid #c6c6c6; display: flex; align-items: center; font-size: 11px; letter-spacing: -.22px; padding: 0 0 2px 8px; }
.s-avg { margin-left: 758px; width: 126px; flex: none; }
.s-cnt { width: 66px; flex: none; }
.s-sum { width: 245px; flex: none; }
.zl { height: 1px; width: 93px; background: #999; }
.plus { margin: 0 11px 0 3px; }
.zoom { letter-spacing: -.3px; }

.taskbar { height: 40px; flex: none; background: linear-gradient(90deg, #0c120b, #151c0c 12%, #1c2409 25%, #202a0d 42%, #18200c 62%, #10170e 78%, #0c120d); display: flex; color: #fff; }
.slot { width: 49px; display: flex; align-items: center; justify-content: center; position: relative; flex: none; }
.s48 { width: 48px; }
.cort { margin-right: 2px; }
.up { margin-top: -2px; }
.run { background: linear-gradient(#76b9ed, #76b9ed) center bottom / 40px 2px no-repeat; }
.xl { background: linear-gradient(#76b9ed, #76b9ed) center bottom / 48px 2px no-repeat, linear-gradient(90deg, #4a5040 45px, #343b2b 45px); width: 48px; margin-left: 1px; }
.np { width: 49px; }
.tray { margin-left: auto; display: flex; align-items: center; width: 291px; }
.vk { width: 16px; height: 16px; margin: 0 8px 0 10px; background: #f5e5e5; border: 1px solid #c77; color: #c01818; font: 900 13px/14px "Noto Sans"; text-align: center; }
.tray svg { margin-right: 8px; }
.tray svg:first-child { margin-right: 0; }
.tray svg:nth-of-type(4) { margin-right: 12px; }
.eng { width: 25px; letter-spacing: -.3px; }
.clock { width: 70px; margin-left: 3px; text-align: center; line-height: 18px; letter-spacing: -.35px; padding-left: 3px; flex: none; }
.tray .note { margin: 6px 0 0 9px; }
.nn { font: 700 12px "Noto Sans"; fill: #fff; }
.peek { width: 1px; height: 40px; background: #555; margin-left: 11px; }

.menu { position: absolute; left: 1076px; top: 307px; width: 203px; height: 420px; background: #fff; border: 1px solid #c6c6c6; padding: 1px 0 0; box-shadow: 3px 3px 3px -1px rgba(0,0,0,.5); letter-spacing: -.3px; color: #555; }
.mi { height: 22px; display: flex; align-items: center; padding-left: 4px; gap: 15px; margin-right: 1px; }
.mi svg { margin-top: -1px; }
.menu hr { height: 1px; border: 0; background: #dcdfe2; margin: 3px 1px 2px 32px; }
.hov { background: #e6e6e6; }
.mi .sub { margin: 1px 0 0 53px; }
.marks { position: absolute; left: 0; top: 0; pointer-events: none; }
```

FILE: grid.js
```js
const widths = [37, 54, 112, 79, 76, 105, 105, 109, 140, 141, 26];
const letters = 'ABCDEFGHIJ'.split('');
const head1 = ['ID', 'Tuan', 'TenBenhNhan', 'NamSinh', 'GioiTinh', 'NgayYeuCau', 'NgayLayMau', 'NguoiLayMau', 'NgayNhanMau', 'NguoiSaoThongTin', 'N'];
const row2 = [888, 18, 'Hê Lô', 2008, 'Nam', '30/3/2018', '31/1/2018 10:10', 'Hê Lô', '20/1/1998 3:10', 'Hê Lô', ''];
const head4 = ['ID', 'Urea', 'Creatinine', 'CPK', 'Calcium', 'Phosphorous', 'Amylase', 'Lipase', 'BilirubinToanPhan', 'AST', 'A'];
const row5 = [888, '', 1, 1, 1, 1, 1, 1, 1, 1, ''];
const arrow = '<span class="fb"><svg width="7" height="4"><path d="M0 0h7L3.500 4z" fill="#555"/></svg></span>';
const sorted = '<span class="fb"><svg width="12" height="10"><path d="M1 5h5L3.500 8z" fill="#555"/><path d="M8.500 0v8M6.500 6l2 2 2-2" fill="none" stroke="#555"/></svg></span>';

function row(label, cls, cell) {
  return `<div class="row ${cls}">${label}${widths.map((w, i) => cell(w, i)).join('')}</div>`;
}
function box(w, cls, html) {
  return `<div class="c ${cls}" style="width:${w}px">${html}</div>`;
}
let html = row('<div class="rh corner"><svg width="12" height="12"><path d="M12 0v12H0z" fill="#b0b0b0"/></svg></div>', '', (w, i) => box(w, 'ch', letters[i] || ''));
for (let r = 1; r <= 23; r++) {
  html += row(`<div class="rh">${r}</div>`, r < 3 ? 'hl' : '', (w, i) => {
    if (r === 1) return box(w, 'th s' + (i ? '' : ' first'), `<span>${head1[i]}</span>${i < 10 ? arrow : ''}`);
    if (r === 2) return box(w, 'sd' + (/^\d/.test(row2[i]) ? ' n' : ''), row2[i]);
    if (r === 3) return box(w, 'pre', '');
    if (r === 4) return box(w, 'th', `<span>${head4[i]}</span>${i === 0 ? sorted : i < 10 ? arrow : ''}`);
    if (r === 5) return box(w, 'td n', row5[i]);
    return box(w, '', '');
  });
}
document.getElementById('grid').innerHTML = html;

const names = ['Urea', 'Creatinine', 'XetNghiem', 'KetQua', 'CPK', 'Calcium', 'Phosphorous', 'Amylase'];
const icon = '<svg width="13" height="12"><use href="#qtable"/></svg>';
const loaded = '<svg width="15" height="17" viewBox="0 0 15 17"><path d="M1 .5h7l4 4v11.500H1z" fill="#fff" stroke="#666"/><path d="M8 .5v4h4" fill="none" stroke="#666"/><path d="M6 8h9v9H6z" fill="#9fd5b7"/><path d="M7 12q1-3 4.500-2l2 1M14 8.500V11h-2.500M14 13q-1 3-4.500 2l-2-1M7 16.500V14h2.500" fill="none" stroke="#3f8562" stroke-width="1.300"/></svg>';
document.getElementById('queries').innerHTML = names.map((n, i) =>
  `<div class="q ${i === 2 ? 'g' : ''}">${icon}<div>${n}<p>1 row loaded.</p></div>${i === 2 ? loaded : ''}</div>`).join('');
```
